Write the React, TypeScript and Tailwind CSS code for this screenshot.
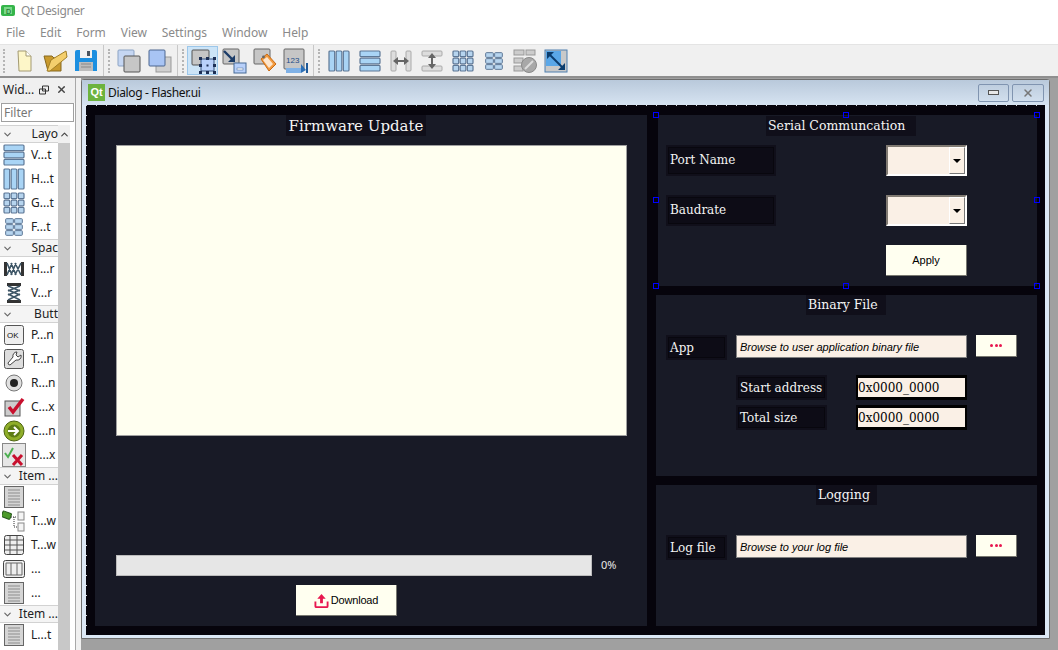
import React from "react";
import {ChevronDown, ChevronUp, X} from "lucide-react";

const sans = "font-['Noto_Sans',sans-serif]";
const serif = "font-['DejaVu_Serif',serif]";
const arial = "font-['Liberation_Sans',sans-serif]";

const Handle: React.FC<{className: string}> = ({className}) => (
 <span className={`absolute w-[6px] h-[6px] border border-[#0000ff] ${className}`} />
);

const Cells: React.FC<{rows: number; cols: number; size?: number; fill?: string; stroke?: string}> = ({
 rows,
 cols,
 size = 24,
 fill = "#a9d4f5",
 stroke = "#5d7796",
}) => {
 const gap = 1.5;
 const w = (20 - gap * (cols - 1)) / cols;
 const h = (20 - gap * (rows - 1)) / rows;
 const cells = [];
 for (let r = 0; r < rows; r++) {
  for (let c = 0; c < cols; c++) {
   cells.push(
    <rect key={`${r}-${c}`} x={2 + c * (w + gap)} y={2 + r * (h + gap)} width={w} height={h} rx="1" fill={fill} stroke={stroke} strokeWidth="1.2" />,
   );
  }
 }
 return (
  <svg width={size} height={size} viewBox="0 0 24 24">
   {cells}
  </svg>
 );
};

const NewFile = () => (
 <svg width="24" height="26" viewBox="0 0 24 26">
  <path d="M6 3h8l5 5v15H7z" fill="#fdf6c8" stroke="#a39a72" />
  <path d="M14 3v5h5" fill="#fff" stroke="#a39a72" />
 </svg>
);

const Folder = () => (
 <svg width="26" height="26" viewBox="0 0 26 26">
  <path d="M2 8h8l2 2h7v13H6z" fill="#c99a2e" stroke="#86691f" />
  <path d="M9 12 24 3l1 6-17 14H5z" fill="#f4cf6d" stroke="#a27f26" />
 </svg>
);

const Save = () => (
 <svg width="24" height="24" viewBox="0 0 24 24">
  <path d="M1 3a2 2 0 0 1 2-2h18a2 2 0 0 1 2 2v19H1z" fill="#1c8fe0" />
  <rect x="6" y="1" width="12" height="8" fill="#f2f2f2" />
  <rect x="13" y="2" width="3" height="5" fill="#4c5560" />
  <rect x="5" y="13" width="14" height="9" fill="#bcbcbc" />
  <path d="M7 15h10M7 18h10" stroke="#888" />
 </svg>
);

const Stack: React.FC<{front?: boolean}> = ({front}) => (
 <svg width="24" height="24" viewBox="0 0 24 24">
  {front ? (
   <>
    <rect x="8" y="8" width="15" height="15" fill="#d0d0d0" stroke="#999" />
    <rect x="1" y="1" width="16" height="16" rx="1" fill="#a8c4f4" stroke="#4d6690" />
   </>
  ) : (
   <>
    <rect x="1" y="1" width="16" height="16" rx="1" fill="#c5d6f2" stroke="#8ba3c4" />
    <rect x="7" y="7" width="16" height="16" rx="1" fill="#c6c6c6" stroke="#555" />
   </>
  )}
 </svg>
);

const WidgetMode = () => (
 <svg width="28" height="26" viewBox="0 0 28 26">
  <rect x="3" y="2" width="17" height="15" rx="1" fill="#c6c6c6" stroke="#555" />
  <rect x="12" y="11" width="13" height="12" fill="#b8d0fa" stroke="#3a5680" />
  {[
   [10, 9],
   [17, 9],
   [24, 9],
   [10, 16],
   [24, 16],
   [10, 23],
   [17, 23],
   [24, 23],
  ].map(([x, y]) => (
   <rect key={`${x}-${y}`} x={x} y={y} width="3" height="3" fill="#1d2f55" />
  ))}
  <rect x="17.5" y="16.5" width="2" height="2" fill="#1d2f55" />
 </svg>
);

const Connect = () => (
 <svg width="26" height="26" viewBox="0 0 26 26">
  <rect x="2" y="1" width="16" height="15" rx="1" fill="#c6c6c6" stroke="#666" />
  <rect x="13" y="15" width="12" height="10" fill="#b8d0fa" stroke="#466a96" />
  <rect x="16" y="20" width="6" height="2" fill="#fff" stroke="#466a96" strokeWidth=".5" />
  <path d="M3 3l9 9" stroke="#1c3c68" strokeWidth="2.4" />
  <path d="M14 7v7H7z" fill="#1c3c68" />
 </svg>
);

const Buddy = () => (
 <svg width="26" height="26" viewBox="0 0 26 26">
  <rect x="2" y="1" width="16" height="15" rx="1" fill="#c6c6c6" stroke="#666" />
  <path d="M9 11l6-5 9 10-7 7z" fill="#f29a3e" stroke="#c96a12" />
  <path d="M11 12l4-3 6 7-4 4z" fill="#fff" opacity=".75" />
  <circle cx="11.5" cy="9" r="1.4" fill="#666" />
 </svg>
);

const TabOrder = () => (
 <svg width="26" height="26" viewBox="0 0 26 26">
  <rect x="1" y="1" width="20" height="20" rx="1" fill="#c6c6c6" stroke="#666" />
  <path d="M3 20h15v5H3z" fill="#7fb1e6" />
  <path d="M18 16l5 6-5 3z" fill="#2c6fb5" />
  <rect x="23" y="15" width="2" height="10" fill="#1f5a99" />
  <text x="3" y="15" fontSize="8" fontFamily="Liberation Sans" fill="#244c86">
   123
  </text>
 </svg>
);

const SplitH = () => (
 <svg width="22" height="22" viewBox="0 0 22 22">
  <rect x="1" y="1" width="5" height="20" rx="1" fill="#ddd" stroke="#aaa" />
  <rect x="16" y="1" width="5" height="20" rx="1" fill="#ddd" stroke="#aaa" />
  <path d="M3 11l5-4v8zM19 11l-5-4v8z" fill="#666" />
  <rect x="7" y="10" width="8" height="2" fill="#666" />
 </svg>
);

const SplitV = () => (
 <svg width="22" height="22" viewBox="0 0 22 22">
  <rect x="1" y="1" width="20" height="5" rx="1" fill="#ddd" stroke="#aaa" />
  <rect x="1" y="16" width="20" height="5" rx="1" fill="#ddd" stroke="#aaa" />
  <path d="M11 3l-4 5h8zM11 19l-4-5h8z" fill="#666" />
  <rect x="10" y="7" width="2" height="8" fill="#666" />
 </svg>
);

const BreakLayout = () => (
 <svg width="24" height="26" viewBox="0 0 24 26">
  <rect x="1" y="2" width="10" height="5" fill="#ccc" stroke="#999" />
  <rect x="13" y="2" width="9" height="5" fill="#ccc" stroke="#999" />
  <rect x="1" y="10" width="9" height="5" fill="#ccc" stroke="#999" />
  <rect x="1" y="18" width="9" height="5" fill="#ccc" stroke="#999" />
  <circle cx="16" cy="17" r="7.5" fill="#a8a8a8" stroke="#8a8a8a" />
  <path d="M12 21l8-8" stroke="#ddd" strokeWidth="2" />
 </svg>
);

const AdjustSize = () => (
 <svg width="24" height="24" viewBox="0 0 24 24">
  <rect x="1" y="1" width="22" height="22" fill="#c9c9c9" stroke="#4f7fae" />
  <rect x="2" y="2" width="15" height="15" fill="#5aa7e8" />
  <path d="M5 5l14 14" stroke="#0b3d6e" strokeWidth="2" />
  <path d="M3 3h7l-7 7zM21 21h-7l7-7z" fill="#0b3d6e" />
 </svg>
);

const Grip = () => <span className="w-[3px] h-[24px] mx-[2px] border-l-2 border-dotted border-[#b5b5b5]" />;
const Sep = () => <span className="w-px h-[31px] mx-[2px] bg-[#c8c8c8]" />;

const Tool: React.FC<{children: React.ReactNode; active?: boolean}> = ({children, active}) => (
 <div className={`w-[31px] h-[29px] flex items-center justify-center ${active ? "bg-[#cce4f7] border border-[#9cc7ea]" : ""}`}>{children}</div>
);

const Spring: React.FC<{vertical?: boolean}> = ({vertical}) => (
 <svg width="22" height="22" viewBox="0 0 22 22" className={vertical ? "rotate-90" : ""}>
  <rect x="1" y="4" width="3" height="14" fill="#333" />
  <rect x="18" y="4" width="3" height="14" fill="#333" />
  <path d="M4 5l5 12M8 5l5 12M12 5l6 12M4 17 9 5M8 17l5-12M12 17l6-12" stroke="#3d5566" strokeWidth="1.6" />
 </svg>
);

const ListIcon = () => (
 <svg width="20" height="22" viewBox="0 0 20 22">
  <rect x=".5" y=".5" width="19" height="21" fill="#d5d5d5" stroke="#666" />
  <path d="M4 4h12M4 7h12M4 10h12M4 13h12M4 16h12M4 19h12" stroke="#8d8d8d" />
 </svg>
);

const PushIcon = () => (
 <svg width="20" height="20" viewBox="0 0 20 20">
  <rect x=".5" y=".5" width="19" height="19" rx="2" fill="#eee" stroke="#555" />
  <text x="3" y="13" fontSize="8" fontFamily="Liberation Sans" fill="#111">
   OK
  </text>
 </svg>
);

const ToolIcon = () => (
 <svg width="20" height="20" viewBox="0 0 20 20">
  <rect x=".5" y=".5" width="19" height="19" rx="2" fill="#ddd" stroke="#555" />
  <path d="M13 3a4 4 0 0 0-4 5l-5 6a2 2 0 0 0 2 2l6-5a4 4 0 0 0 5-5l-3 2-2-2z" fill="#fff" stroke="#444" />
 </svg>
);

const RadioIcon = () => (
 <svg width="20" height="20" viewBox="0 0 20 20">
  <circle cx="10" cy="10" r="8" fill="#e0e0e0" stroke="#777" />
  <circle cx="10" cy="10" r="4" fill="#222" />
 </svg>
);

const CheckIcon = () => (
 <svg width="22" height="22" viewBox="0 0 22 22">
  <rect x="2" y="5" width="15" height="15" fill="#ccc" stroke="#555" />
  <path d="M6 11l4 5L20 3" fill="none" stroke="#c8102e" strokeWidth="3.5" />
 </svg>
);

const CommandIcon = () => (
 <svg width="22" height="22" viewBox="0 0 22 22">
  <circle cx="11" cy="11" r="10" fill="#8fae2a" stroke="#4d6410" />
  <circle cx="11" cy="11" r="6.5" fill="#5d7c16" />
  <path d="M5 11h10M11 7l4 4-4 4" fill="none" stroke="#fff" strokeWidth="2" />
 </svg>
);

const DialogIcon = () => (
 <svg width="24" height="24" viewBox="0 0 24 24">
  <rect x=".5" y=".5" width="23" height="23" fill="#e6e6e6" stroke="#888" />
  <path d="M3 10l3 4 5-9" fill="none" stroke="#4caf50" strokeWidth="2" />
  <path d="M11 12l9 10M20 12l-9 10" stroke="#c8102e" strokeWidth="3" />
 </svg>
);

const TreeIcon = () => (
 <svg width="24" height="22" viewBox="0 0 24 22">
  <rect x="0" y="2" width="9" height="6" rx="1" fill="#4c9a2a" stroke="#24561a" transform="rotate(20 4 5)" />
  <path d="M9 7h5M12 7v10h3" stroke="#333" strokeDasharray="1 1" fill="none" />
  <rect x="16" y="2" width="6" height="8" fill="#f4f4f4" stroke="#888" />
  <rect x="16" y="13" width="6" height="8" fill="#f4f4f4" stroke="#888" />
 </svg>
);

const TableIcon = () => (
 <svg width="20" height="20" viewBox="0 0 20 20">
  <rect x=".5" y=".5" width="19" height="19" rx="2" fill="#eee" stroke="#444" />
  <path d="M1 5h18M1 10h18M1 15h18M6 1v18M13 1v18" stroke="#555" />
 </svg>
);

const ColumnIcon = () => (
 <svg width="22" height="18" viewBox="0 0 22 18">
  <rect x=".5" y=".5" width="21" height="17" rx="2" fill="#eee" stroke="#444" />
  <path d="M8 3v12M14 3v12M3 3h16v12H3z" fill="none" stroke="#666" />
 </svg>
);

const UploadIcon = () => (
 <svg width="15" height="15" viewBox="0 0 16 16">
  <path d="M8 1 3.5 6H6.5v5h3V6h3z" fill="#e8174f" />
  <path d="M1.5 9v5a1 1 0 0 0 1 1h11a1 1 0 0 0 1-1V9" fill="none" stroke="#e8174f" strokeWidth="2" />
 </svg>
);

const Category: React.FC<{label: string}> = ({label}) => (
 <div className="h-[18px] flex items-center border-y border-[#d2d2d2] bg-[#f4f4f4] overflow-hidden whitespace-nowrap">
  <ChevronDown size={11} strokeWidth={2.5} className="ml-[2px] shrink-0 text-[#666]" />
  <span className="flex-1 text-right text-[12px] text-[#222]">{label}</span>
 </div>
);

const ToolRow: React.FC<{icon: React.ReactNode; label: string}> = ({icon, label}) => (
 <div className="h-[24px] flex items-center">
  <div className="w-[28px] flex justify-center shrink-0">{icon}</div>
  <span className="ml-[3px] text-[12px] text-[#222] whitespace-nowrap">{label}</span>
 </div>
);

const DarkLabel: React.FC<{className?: string; children: React.ReactNode}> = ({className = "", children}) => (
 <div className={`${serif} text-[12px] text-[#f4f4f4] bg-[#0d0c16] border-[2px] border-[#100f1a] shadow-[inset_0_0_0_1px_#08070e] flex items-center whitespace-nowrap ${className}`}>
  {children}
 </div>
);

const Heading: React.FC<{className?: string; children: React.ReactNode}> = ({className = "", children}) => (
 <div className={`${serif} text-[12.5px] text-[#f4f4f4] bg-[#100f1a] h-[20px] pl-[2px] flex items-center whitespace-nowrap ${className}`}>{children}</div>
);

const Combo = () => (
 <div className="w-[81px] h-[31px] bg-[#faf0e6] border-2 border-t-[#807a72] border-l-[#807a72] border-r-white border-b-white flex justify-end">
  <div className="w-[16px] h-full bg-[#faf0e6] border border-t-white border-l-white border-r-[#777] border-b-[#777] flex items-center justify-center">
   <span className="w-0 h-0 border-x-[4px] border-x-transparent border-t-[4px] border-t-black" />
  </div>
 </div>
);

const RaisedButton: React.FC<{className?: string; children: React.ReactNode}> = ({className = "", children}) => (
 <div className={`bg-[#fffff0] border-r border-b border-[#77776f] flex items-center justify-center ${className}`}>{children}</div>
);

const Browse: React.FC<{placeholder: string}> = ({placeholder}) => (
 <>
  <div className={`w-[231px] h-[23px] ml-[9px] pt-[1px] bg-[#faf0e6] border border-[#808080] flex items-center pl-[3px] ${arial} italic text-[11px] text-black whitespace-nowrap`}>
   {placeholder}
  </div>
  <RaisedButton className="w-[41px] h-[22px] ml-[9px] gap-[1.5px]">
   <span className="w-[3px] h-[3px] rounded-full bg-[#e8174f]" />
   <span className="w-[3px] h-[3px] rounded-full bg-[#e8174f]" />
   <span className="w-[3px] h-[3px] rounded-full bg-[#e8174f]" />
  </RaisedButton>
 </>
);

const HexField: React.FC<{label: string}> = ({label}) => (
 <div className="flex items-center ml-[80px] h-[25px]">
  <DarkLabel className="w-[91px] h-[25px] pl-[2px] text-[11.7px]">{label}</DarkLabel>
  <div className={`w-[111px] h-[25px] ml-[29px] bg-[#faf0e6] border-y-[3px] border-x-[2px] border-black flex items-center ${serif} text-[12px] text-black`}>0x0000_0000</div>
 </div>
);

export default function App() {
 return (
  <div className={`w-[1058px] h-[650px] overflow-hidden flex flex-col bg-[#a0a0a0] ${sans}`}>
   <div className="h-[22px] bg-white flex items-center shrink-0">
    <svg width="14" height="12" viewBox="0 0 14 12" className="ml-px">
     <rect width="14" height="11" rx="2" fill="#35b54a" />
     <rect x="3" y="2" width="8" height="7" fill="#7bd88a" />
     <text x="5" y="8.5" fontSize="7" fontFamily="Liberation Sans" fill="#0c5e1b">
      D
     </text>
    </svg>
    <span className="ml-[6px] text-[12px] tracking-[-0.4px] text-[#8c8c8c]">Qt Designer</span>
   </div>

   <div className="h-[22px] bg-white flex items-center gap-[15px] pl-[6px] text-[12px] tracking-[-0.05px] text-[#8a8a8a] shrink-0">
    <span>File</span>
    <span>Edit</span>
    <span>Form</span>
    <span>View</span>
    <span>Settings</span>
    <span>Window</span>
    <span>Help</span>
   </div>

   <div className="h-[34px] bg-[#f0f0f0] border-t border-[#e4e4e4] border-b-2 border-b-[#8f8f8f] flex items-center pl-[1px] shrink-0">
    <Grip />
    <Tool><NewFile /></Tool>
    <Tool><Folder /></Tool>
    <Tool><Save /></Tool>
    <Sep />
    <Grip />
    <Tool><Stack /></Tool>
    <Tool><Stack front /></Tool>
    <Sep />
    <Grip />
    <Tool active><WidgetMode /></Tool>
    <Tool><Connect /></Tool>
    <Tool><Buddy /></Tool>
    <Tool><TabOrder /></Tool>
    <Sep />
    <Grip />
    <Tool><Cells rows={1} cols={3} /></Tool>
    <Tool><Cells rows={3} cols={1} /></Tool>
    <Tool><SplitH /></Tool>
    <Tool><SplitV /></Tool>
    <Tool><Cells rows={3} cols={3} fill="#b6d4ee" /></Tool>
    <Tool><Cells rows={3} cols={2} size={20} fill="#b6d4ee" /></Tool>
    <Tool><BreakLayout /></Tool>
    <Tool><AdjustSize /></Tool>
   </div>

   <div className="flex-1 min-h-0 flex">
    <div className="w-[81px] shrink-0 bg-[#f0f0f0] overflow-hidden">
     <div className="w-[76px] h-full bg-white border-r border-[#a8a8a8] flex flex-col">
      <div className="h-[25px] pb-[2px] flex items-center pl-[3px] text-[12px] text-[#222] bg-[#f0f0f0] shrink-0">
       <span>Wid...</span>
       <svg width="10" height="10" viewBox="0 0 10 10" className="ml-[5px]">
        <path d="M3.5 1h6v5h-6zM.5 4h6v5h-6z" fill="#f0f0f0" stroke="#333" />
       </svg>
       <X size={11} strokeWidth={3} className="ml-[7px] text-[#444]" />
      </div>
      <div className="w-[73px] h-[19px] ml-px border border-[#a0a0a0] bg-white pl-[2px] text-[12px] leading-[17px] text-[#777] shrink-0">Filter</div>
      <div className="flex-1 flex mt-[3px] min-h-0 overflow-hidden">
       <div className="w-[58px] shrink-0">
        <Category label="Layo" />
        <ToolRow icon={<Cells rows={3} cols={1} />} label="V...t" />
        <ToolRow icon={<Cells rows={1} cols={3} />} label="H...t" />
        <ToolRow icon={<Cells rows={3} cols={3} fill="#b6d4ee" />} label="G...t" />
        <ToolRow icon={<Cells rows={3} cols={2} size={20} fill="#b6d4ee" />} label="F...t" />
        <Category label="Spac" />
        <ToolRow icon={<Spring />} label="H...r" />
        <ToolRow icon={<Spring vertical />} label="V...r" />
        <Category label="Butt" />
        <ToolRow icon={<PushIcon />} label="P...n" />
        <ToolRow icon={<ToolIcon />} label="T...n" />
        <ToolRow icon={<RadioIcon />} label="R...n" />
        <ToolRow icon={<CheckIcon />} label="C...x" />
        <ToolRow icon={<CommandIcon />} label="C...n" />
        <ToolRow icon={<DialogIcon />} label="D...x" />
        <Category label="Item ..." />
        <ToolRow icon={<ListIcon />} label="..." />
        <ToolRow icon={<TreeIcon />} label="T...w" />
        <ToolRow icon={<TableIcon />} label="T...w" />
        <ToolRow icon={<ColumnIcon />} label="..." />
        <ToolRow icon={<ListIcon />} label="..." />
        <Category label="Item ..." />
        <ToolRow icon={<ListIcon />} label="L...t" />
       </div>
       <div className="w-[12px] bg-[#c8c8c8] flex flex-col">
        <div className="h-[18px] bg-[#f0f0f0] flex items-center justify-center">
         <ChevronUp size={11} strokeWidth={2.5} className="text-[#444]" />
        </div>
       </div>
      </div>
     </div>
    </div>

    <div className="w-[969px] h-[560px] mt-[1px] shrink-0 border border-[#6e6e6e] bg-[#dce8f5] px-[4px] flex flex-col rounded-tl-[3px] rounded-tr-[3px]">
     <div className="h-[25px] -mx-[4px] px-[4px] bg-gradient-to-b from-[#b9c9db] to-[#d6e3f1] flex items-center shrink-0">
      <span className={`w-[17px] h-[17px] ml-[2px] bg-[#6cb33f] text-white font-bold text-[11px] leading-[17px] text-center ${arial}`}>Qt</span>
      <span className="ml-[3px] text-[12px] tracking-[-0.35px] text-[#111]">Dialog - Flasher.ui</span>
      <div className="ml-auto mr-[1px] flex gap-[3px]">
       <div className="w-[31px] h-[18px] border border-[#8094b0] rounded-[2px] flex items-center justify-center">
        <span className="w-[11px] h-[5px] bg-[#e8e8e8] border border-[#555]" />
       </div>
       <div className="w-[32px] h-[18px] border border-[#8094b0] rounded-[2px] flex items-center justify-center">
        <X size={12} strokeWidth={3} className="text-[#777]" />
       </div>
      </div>
     </div>

     <div className="relative w-[959px] h-[530px] bg-[#06040c] pl-[9px] pt-[10px] flex gap-[9px] shrink-0">
      <div className="absolute left-0 top-0 w-full h-px bg-[repeating-linear-gradient(90deg,#d8d8d8_0,#d8d8d8_1px,transparent_1px,transparent_10px)]" />
      <div className="absolute left-0 top-0 w-px h-full bg-[repeating-linear-gradient(180deg,#d8d8d8_0,#d8d8d8_1px,transparent_1px,transparent_10px)]" />

      <div className="w-[552px] h-[511px] bg-[#181a26] flex flex-col">
       <div className={`w-[140px] h-[21px] ml-[191px] pt-[1px] bg-[#100f1a] flex items-center justify-center ${serif} text-[15px] text-[#f4f4f4] whitespace-nowrap`}>Firmware Update</div>
       <div className="w-[511px] h-[291px] ml-[21px] mt-[9px] bg-[#fffff0] border border-[#a0a0a0]" />
       <div className="flex items-center ml-[21px] mt-[119px] h-[21px]">
        <div className="w-[476px] h-[21px] bg-[#e6e6e6] border border-[#bcbcbc]" />
        <span className="ml-[9px] text-[11px] text-[#e8e8e8]">0%</span>
       </div>
       <RaisedButton className={`w-[101px] h-[31px] ml-[201px] mt-[9px] gap-[2px] ${arial} text-[11px] tracking-[-0.2px] text-black`}>
        <UploadIcon />
        <span>Download</span>
       </RaisedButton>
      </div>

      <div className="w-[381px] flex flex-col gap-[9px]">
       <div className="relative h-[171px] bg-[#181a26] border-l-2 border-[#06040c]">
        <Heading className="w-[150px] ml-[108px] mt-[1px]">Serial Communcation</Heading>
        <div className="flex items-start ml-[8px] mt-[9px]">
         <DarkLabel className="w-[110px] h-[31px] pl-[2px] pb-[2px]">Port Name</DarkLabel>
         <div className="ml-[110px]"><Combo /></div>
        </div>
        <div className="flex items-start ml-[8px] mt-[19px]">
         <DarkLabel className="w-[110px] h-[31px] pl-[2px] pb-[2px]">Baudrate</DarkLabel>
         <div className="ml-[110px]"><Combo /></div>
        </div>
        <RaisedButton className={`w-[81px] h-[31px] ml-[228px] mt-[19px] ${arial} text-[11px] text-black`}>Apply</RaisedButton>
        <Handle className="-left-[5px] -top-[3px]" />
        <Handle className="left-[185px] -top-[3px]" />
        <Handle className="-right-[3px] -top-[3px]" />
        <Handle className="-left-[5px] top-[82px]" />
        <Handle className="-right-[3px] top-[82px]" />
        <Handle className="-left-[5px] -bottom-[3px]" />
        <Handle className="left-[185px] -bottom-[3px]" />
        <Handle className="-right-[3px] -bottom-[3px]" />
       </div>

       <div className="h-[181px] bg-[#181a26] flex flex-col">
        <Heading className="w-[80px] ml-[150px]">Binary File</Heading>
        <div className="flex items-start ml-[10px] mt-[20px]">
         <DarkLabel className="w-[61px] h-[25px] pl-[2px]">App</DarkLabel>
         <Browse placeholder="Browse to user application binary file" />
        </div>
        <div className="mt-[15px] flex flex-col gap-[5px]">
         <HexField label="Start address" />
         <HexField label="Total size" />
        </div>
       </div>

       <div className="h-[141px] bg-[#181a26] flex flex-col">
        <Heading className="w-[61px] ml-[160px]">Logging</Heading>
        <div className="flex items-start ml-[10px] mt-[30px]">
         <DarkLabel className="w-[61px] h-[25px] pl-[2px]">Log file</DarkLabel>
         <Browse placeholder="Browse to your log file" />
        </div>
       </div>
      </div>
     </div>
    </div>
   </div>
  </div>
 );
}
